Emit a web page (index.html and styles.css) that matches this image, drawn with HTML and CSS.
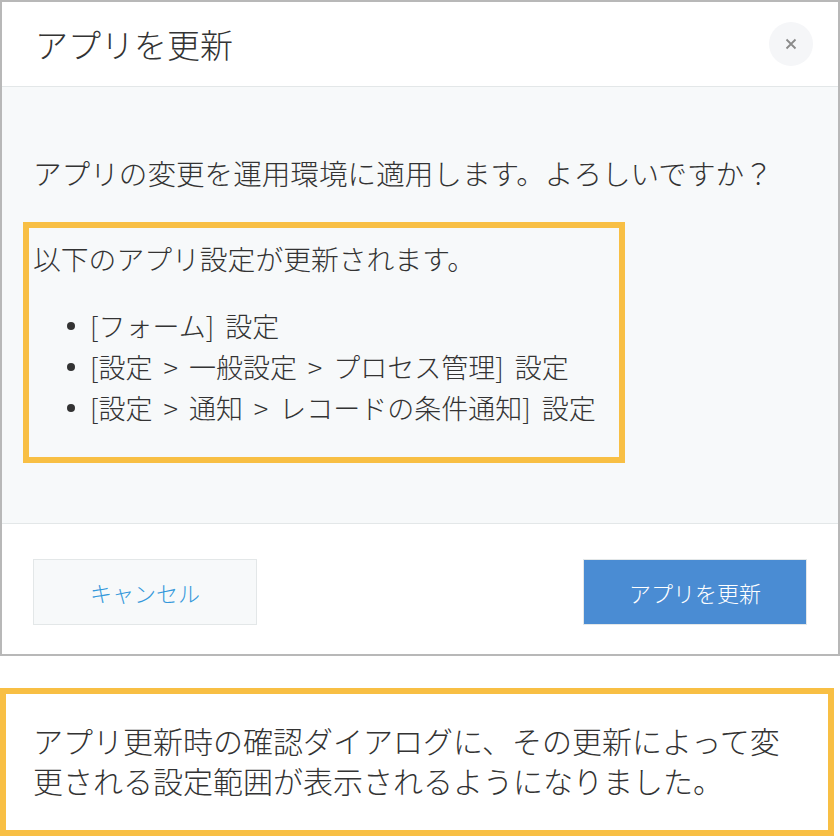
FILE: index.html
```
<!DOCTYPE html>
<html lang="ja">
<head>
<meta charset="utf-8">
<link rel="stylesheet" href="styles.css">
</head>
<body>
<div class="dialog">
  <div class="header">
    <div class="title">アプリを更新</div>
    <div class="close">
      <svg width="12" height="12" viewBox="0 0 12 12"><path d="M1.5 1.5 L10.5 10.5 M10.5 1.5 L1.5 10.5" stroke="#8a8a8a" stroke-width="1.8" fill="none"/></svg>
    </div>
  </div>
  <div class="content">
    <p class="lead">アプリの変更を運用環境に適用します。よろしいですか？</p>
    <div class="highlight">
      <p class="intro">以下のアプリ設定が更新されます。</p>
      <ul class="list">
        <li>[フォーム] 設定</li>
        <li>[設定 &gt; 一般設定 &gt; プロセス管理] 設定</li>
        <li>[設定 &gt; 通知 &gt; レコードの条件通知] 設定</li>
      </ul>
    </div>
  </div>
  <div class="footer">
    <button class="btn btn-cancel">キャンセル</button>
    <button class="btn btn-primary">アプリを更新</button>
  </div>
</div>
<div class="caption">
  <p>アプリ更新時の確認ダイアログに、その更新によって変<br>更される設定範囲が表示されるようになりました。</p>
</div>
</body>
</html>
```
FILE: styles.css
```
* { box-sizing: border-box; }
body {
  margin: 0;
  width: 840px;
  background: #fff;
  font-family: "Noto Sans CJK JP", "Noto Sans", sans-serif;
  font-weight: 300;
  color: #333;
}
p { margin: 0; }
.dialog {
  width: 840px;
  border: 2px solid #b8b8b8;
  background: #fff;
}
.header {
  height: 85px;
  border-bottom: 1px solid #e3e7e8;
  display: flex;
  align-items: center;
  justify-content: space-between;
  padding: 0 25px 0 33px;
}
.title {
  font-size: 33px;
  line-height: 40px;
  color: #333;
}
.close {
  width: 44px;
  height: 44px;
  border-radius: 50%;
  background: #f5f6f8;
  display: flex;
  align-items: center;
  justify-content: center;
}
.content {
  height: 437px;
  background: #f7f9fa;
  border-bottom: 1px solid #e3e7e8;
  padding: 66px 31px 0 31px;
}
.lead {
  font-size: 28.6px;
  line-height: 40px;
}
.highlight {
  margin: 29px 0 0 -10px;
  width: 602px;
  border: 6px solid #f8bf44;
  padding: 10px 4px 29px 4px;
}
.intro {
  font-size: 27.8px;
  line-height: 40px;
}
.list {
  list-style: none;
  margin: 27px 0 0 0;
  padding: 0;
}
.list li {
  position: relative;
  font-size: 27px;
  line-height: 41px;
  word-spacing: 5px;
  padding-left: 57px;
}
.list li::before {
  content: "";
  position: absolute;
  left: 34px;
  top: 17px;
  width: 8px;
  height: 8px;
  border-radius: 50%;
  background: #333;
}
.footer {
  height: 130px;
  display: flex;
  align-items: flex-start;
  justify-content: space-between;
  padding: 35px 31px 0 31px;
}
.btn {
  width: 224px;
  height: 66px;
  font-family: inherit;
  font-weight: 300;
  font-size: 22px;
  border: 1px solid #e3e7e8;
  padding: 0;
}
.btn-cancel {
  background: #f7f9fa;
  color: #3498db;
}
.btn-primary {
  background: #4a8cd3;
  color: #fff;
}
.caption {
  margin-top: 32px;
  width: 834px;
  height: 148px;
  border: 6px solid #f8bf44;
  padding: 26px 0 0 27px;
}
.caption p {
  font-size: 30px;
  line-height: 40px;
  color: #333;
}
```
